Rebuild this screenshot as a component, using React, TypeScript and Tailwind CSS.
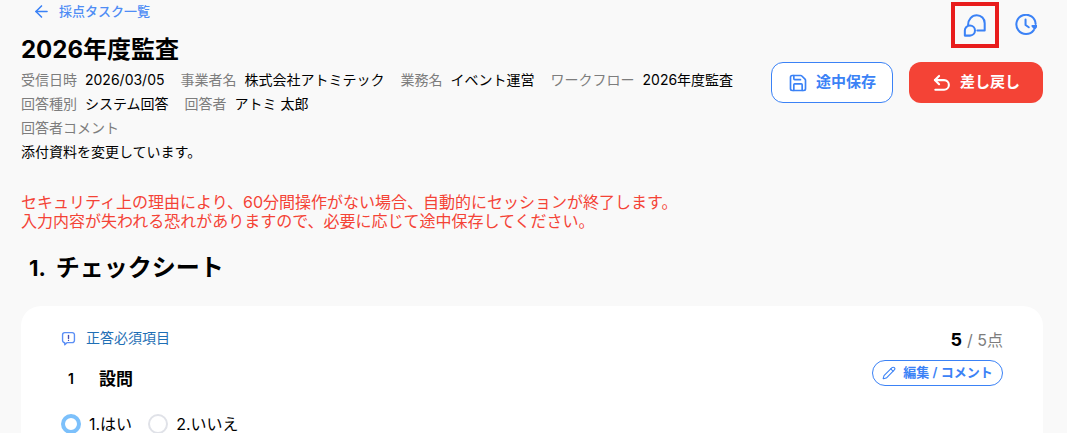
import { ArrowLeft, Pencil, Save } from 'lucide-react';

const FONT = "font-['Inter','Noto_Sans_CJK_JP',sans-serif]";

function Meta({ label, value }: { label: string; value: string }) {
  return (
    <span className="flex gap-2">
      <span className="text-[#7d7d7d]">{label}</span>
      <span className="text-black">{value}</span>
    </span>
  );
}

function ChatIcon() {
  return (
    <svg width="24" height="24" viewBox="0 0 26 26" fill="none" stroke="#3b82f6" strokeWidth="2.200" strokeLinejoin="round" strokeLinecap="round">
      <path d="M5.500 13C5.500 7 9.500 2.500 15 2.500c4.800 0 8.500 3.700 8.500 8.500v8h-8" />
      <path d="M7.500 13.500a5.500 5.500 0 1 1 0 11H2v-5.500A5.500 5.500 0 0 1 7.500 13.500Z" />
    </svg>
  );
}

function HistoryIcon() {
  return (
    <svg width="22" height="22" viewBox="0 0 24 24" fill="none" stroke="#3b82f6" strokeWidth="2.200" strokeLinecap="round" strokeLinejoin="round">
      <path d="M20.500 17.500A10.500 10.500 0 1 1 22.500 11" />
      <path d="M11.500 6V12l3.500 2.500" />
      <path d="M19 13h4.800l-2.400 3z" fill="#3b82f6" />
    </svg>
  );
}

function ReturnIcon() {
  return (
    <svg width="20" height="20" viewBox="0 0 24 24" fill="none" stroke="currentColor" strokeWidth="2.500" strokeLinecap="round" strokeLinejoin="round">
      <path d="M8.500 13.500 3.500 8.500l5-5" />
      <path d="M3.500 8.500h11a5.750 5.750 0 0 1 0 11.500H4" />
    </svg>
  );
}

export default function App() {
  return (
    <div className={`${FONT} relative h-[433px] w-[1067px] overflow-hidden bg-[#f9f9f9] pl-[21px] pr-[24px]`}>
      <div className="absolute left-[951px] top-[2px] h-[46px] w-[48px] border-4 border-[#e81c1c]" />

      <div className="flex h-[23px] items-center gap-[8px] pl-[11px] text-[13px] font-medium text-[#4f8df5]">
        <ArrowLeft size={19} strokeWidth={2} className="text-[#3b82f6]" />
        <span>採点タスク一覧</span>
      </div>

      <div className="flex justify-between">
        <div>
          <h1 className="mt-[11px] text-[24px] font-bold leading-[32px] text-black">2026年度監査</h1>
          <div className="mt-[2px] text-[14px] leading-[24px]">
            <div className="flex gap-[16px]">
              <Meta label="受信日時" value="2026/03/05" />
              <Meta label="事業者名" value="株式会社アトミテック" />
              <Meta label="業務名" value="イベント運営" />
              <Meta label="ワークフロー" value="2026年度監査" />
            </div>
            <div className="flex gap-[16px]">
              <Meta label="回答種別" value="システム回答" />
              <Meta label="回答者" value="アトミ 太郎" />
            </div>
            <div className="text-[#7d7d7d]">回答者コメント</div>
            <div className="text-black">添付資料を変更しています。</div>
          </div>
        </div>
        <div className="flex flex-col items-end">
          <div className="mr-[6px] mt-[-10px] flex items-center gap-[28px]">
            <ChatIcon />
            <HistoryIcon />
          </div>
          <div className="mt-[25px] flex gap-4">
            <button className="flex h-[41px] w-[122px] items-center justify-center gap-[8px] rounded-[12px] border border-[#3b82f6] bg-white text-[15px] font-semibold text-[#3b82f6]">
              <Save size={20} strokeWidth={2} />
              途中保存
            </button>
            <button className="flex h-[41px] w-[134px] items-center justify-center gap-[8px] rounded-[12px] bg-[#f44336] text-[15px] font-semibold text-white">
              <ReturnIcon />
              差し戻し
            </button>
          </div>
        </div>
      </div>

      <p className="mt-[29px] text-[16px] leading-[19px] text-[#f44336]">
        セキュリティ上の理由により、60分間操作がない場合、自動的にセッションが終了します。
        <br />
        入力内容が失われる恐れがありますので、必要に応じて途中保存してください。
      </p>

      <h2 className="mt-[21px] flex gap-[10px] pl-[8px] text-[24px] font-bold leading-[32px] text-black">
        <span className="text-[22px]">1.</span>
        <span>チェックシート</span>
      </h2>

      <div className="mt-[22px] h-[200px] rounded-[20px] bg-white pl-[40px] pr-[40px] pt-[22px]">
        <div className="flex justify-between">
          <div>
            <div className="flex items-center gap-[10px] text-[14px] leading-[20px] text-[#1f6fb5]">
              <svg width="15" height="15" viewBox="0 0 24 24" fill="none" stroke="#5b8ff5" strokeWidth="2.200" strokeLinecap="round" strokeLinejoin="round">
                <path d="M6 2.500h12a3.500 3.500 0 0 1 3.500 3.500v9a3.500 3.500 0 0 1-3.500 3.500h-8L6 22v-3.500a3.500 3.500 0 0 1-3.500-3.500V6A3.500 3.500 0 0 1 6 2.500Z" />
                <path d="M12 7v5" stroke="#4a4fb0" />
                <path d="M12 15h.01" stroke="#4a4fb0" />
              </svg>
              正答必須項目
            </div>
            <div className="mt-[20px] flex items-center text-[17px] font-bold leading-[22px] text-black">
              <span className="w-[38px] pl-[7px] text-[14px] font-semibold">1</span>
              <span>設問</span>
            </div>
            <div className="mt-[24px] flex items-center text-[16px] leading-[20px] text-black">
              <span className="mr-[8px] h-[20px] w-[20px] rounded-full border-[4px] border-[#7cc0fb] bg-white" />
              <span className="mr-[16px]">1.はい</span>
              <span className="mr-[8px] h-[20px] w-[20px] rounded-full border-2 border-[#e0e2e8] bg-white" />
              <span>2.いいえ</span>
            </div>
          </div>
          <div className="flex flex-col items-end">
            <div className="flex items-baseline gap-[5px] leading-[24px]">
              <span className="text-[18px] font-bold text-black">5</span>
              <span className="text-[16px] text-[#7d7d7d]">/ 5点</span>
            </div>
            <button className="mt-[8px] flex h-[26px] w-[131px] items-center justify-center gap-[7px] rounded-full border border-[#3b82f6] bg-white text-[13px] font-semibold text-[#3b82f6]">
              <Pencil size={14} strokeWidth={1.800} />
              編集 / コメント
            </button>
          </div>
        </div>
      </div>
    </div>
  );
}
